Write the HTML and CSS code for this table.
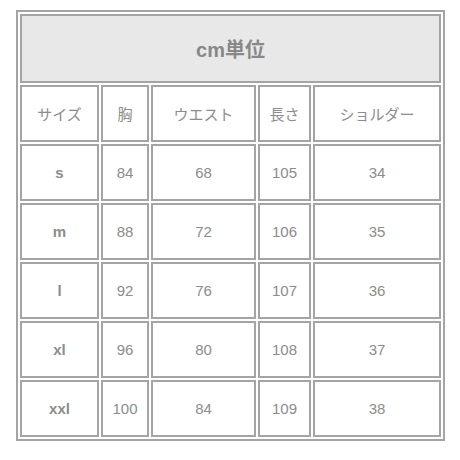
FILE: index.html
```html
<!DOCTYPE html>
<html lang="ja">
<head>
<meta charset="utf-8">
<link rel="stylesheet" href="styles.css">
</head>
<body>
<div class="page">
  <table class="size-table">
    <colgroup>
      <col class="c1"><col class="c2"><col class="c3"><col class="c4"><col class="c5">
    </colgroup>
    <tr><th class="unit" colspan="5">cm単位</th></tr>
    <tr class="row"><td>サイズ</td><td>胸</td><td>ウエスト</td><td>長さ</td><td>ショルダー</td></tr>
    <tr class="row"><td class="sz">s</td><td>84</td><td>68</td><td>105</td><td>34</td></tr>
    <tr class="row"><td class="sz">m</td><td>88</td><td>72</td><td>106</td><td>35</td></tr>
    <tr class="row"><td class="sz">l</td><td>92</td><td>76</td><td>107</td><td>36</td></tr>
    <tr class="row"><td class="sz">xl</td><td>96</td><td>80</td><td>108</td><td>37</td></tr>
    <tr class="row"><td class="sz">xxl</td><td>100</td><td>84</td><td>109</td><td>38</td></tr>
  </table>
</div>
</body>
</html>
```
FILE: styles.css
```css
html, body {
  margin: 0;
  padding: 0;
  background: #fff;
}
.page {
  padding: 10px 0 0 16px;
}
.size-table {
  width: 429px;
  table-layout: fixed;
  border-collapse: separate;
  border-spacing: 2px;
  border: 2px solid #a4a4a4;
  font-family: "Liberation Sans", "Noto Sans CJK JP", sans-serif;
  color: #8c8c8c;
}
.c1 { width: 79px; }
.c2 { width: 48px; }
.c3 { width: 105px; }
.c4 { width: 53px; }
.c5 { width: 128px; }
.size-table th,
.size-table td {
  box-sizing: border-box;
  border: 2px solid #a4a4a4;
  padding: 0;
  text-align: center;
  vertical-align: middle;
}
.unit {
  height: 69px;
  background: #e8e8e8;
  font-size: 20px;
  font-weight: bold;
  color: #888;
  padding-top: 2px;
}
.row td {
  height: 57px;
  font-size: 15px;
}
.row td.sz {
  font-weight: bold;
  font-size: 15px;
}
```
